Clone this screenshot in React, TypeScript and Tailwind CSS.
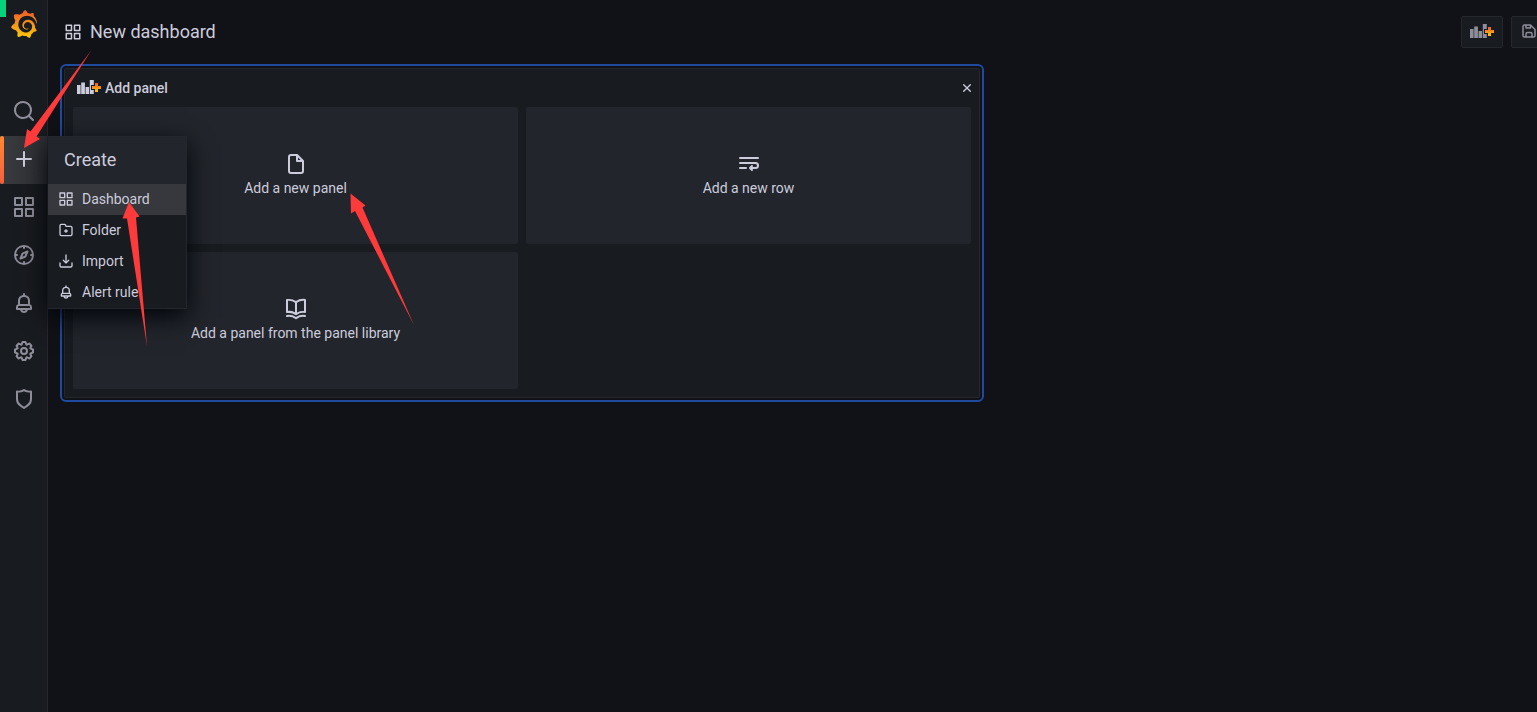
import React from "react";
import { SiGrafana } from "react-icons/si";

const paths = {
  search:
    "M21.71,20.29,18,16.61A9,9,0,1,0,16.61,18l3.68,3.68a1,1,0,0,0,1.42,0A1,1,0,0,0,21.71,20.29ZM11,18a7,7,0,1,1,7-7A7,7,0,0,1,11,18Z",
  plus: "M19,11H13V5a1,1,0,0,0-2,0v6H5a1,1,0,0,0,0,2h6v6a1,1,0,0,0,2,0V13h6a1,1,0,0,0,0-2Z",
  apps: "M10,13H3a1,1,0,0,0-1,1v7a1,1,0,0,0,1,1h7a1,1,0,0,0,1-1V14A1,1,0,0,0,10,13ZM9,20H4V15H9ZM21,2H14a1,1,0,0,0-1,1v7a1,1,0,0,0,1,1h7a1,1,0,0,0,1-1V3A1,1,0,0,0,21,2ZM20,9H15V4h5Zm1,4H14a1,1,0,0,0-1,1v7a1,1,0,0,0,1,1h7a1,1,0,0,0,1-1V14A1,1,0,0,0,21,13Zm-1,7H15V15h5ZM10,2H3A1,1,0,0,0,2,3v7a1,1,0,0,0,1,1h7a1,1,0,0,0,1-1V3A1,1,0,0,0,10,2ZM9,9H4V4H9Z",
  compass:
    "M12,2A10,10,0,1,0,22,12,10,10,0,0,0,12,2Zm1,17.93V19a1,1,0,0,0-2,0v.93A8,8,0,0,1,4.07,13H5a1,1,0,0,0,0-2H4.07A8,8,0,0,1,11,4.07V5a1,1,0,0,0,2,0V4.07A8,8,0,0,1,19.93,11H19a1,1,0,0,0,0,2h.93A8,8,0,0,1,13,19.93ZM15.14,7.55l-5,2.12a1,1,0,0,0-.52.52l-2.12,5a1,1,0,0,0,.21,1.1,1,1,0,0,0,.7.3.93.93,0,0,0,.4-.09l5-2.12a1,1,0,0,0,.52-.52l2.12-5a1,1,0,0,0-1.31-1.31Zm-2.49,5.1-2.28,1,1-2.28,2.28-1Z",
  bell: "M18,13.18V10a6,6,0,0,0-5-5.91V3a1,1,0,0,0-2,0V4.09A6,6,0,0,0,6,10v3.18A3,3,0,0,0,4,16v2a1,1,0,0,0,1,1H8.14a4,4,0,0,0,7.72,0H19a1,1,0,0,0,1-1V16A3,3,0,0,0,18,13.18ZM8,10a4,4,0,0,1,8,0v3H8Zm4,10a2,2,0,0,1-1.72-1h3.44A2,2,0,0,1,12,20Zm6-3H6V16a1,1,0,0,1,1-1H17a1,1,0,0,1,1,1Z",
  cog: "M21.32,9.55l-1.89-.63.89-1.78A1,1,0,0,0,20.13,6L18,3.87a1,1,0,0,0-1.15-.19l-1.78.89-.63-1.89A1,1,0,0,0,13.5,2h-3a1,1,0,0,0-.95.68L8.92,4.57,7.14,3.68A1,1,0,0,0,6,3.87L3.87,6a1,1,0,0,0-.19,1.15l.89,1.78-1.89.63A1,1,0,0,0,2,10.5v3a1,1,0,0,0,.68.95l1.89.63-.89,1.78A1,1,0,0,0,3.87,18L6,20.13a1,1,0,0,0,1.15.19l1.78-.89.63,1.89a1,1,0,0,0,.95.68h3a1,1,0,0,0,.95-.68l.63-1.89,1.78.89A1,1,0,0,0,18,20.13L20.13,18a1,1,0,0,0,.19-1.15l-.89-1.78,1.89-.63A1,1,0,0,0,22,13.5v-3A1,1,0,0,0,21.32,9.55ZM20,12.78l-1.2.4A2,2,0,0,0,17.64,16l.57,1.14-1.1,1.1L16,17.64a2,2,0,0,0-2.79,1.16l-.4,1.2H11.22l-.4-1.2A2,2,0,0,0,8,17.64l-1.14.57-1.1-1.1L6.36,16A2,2,0,0,0,5.2,13.18L4,12.78V11.22l1.2-.4A2,2,0,0,0,6.36,8L5.79,6.89l1.1-1.1L8,6.36A2,2,0,0,0,10.82,5.2l.4-1.2h1.56l.4,1.2A2,2,0,0,0,16,6.36l1.14-.57,1.1,1.1L17.64,8a2,2,0,0,0,1.16,2.79l1.2.4ZM12,8a4,4,0,1,0,4,4A4,4,0,0,0,12,8Zm0,6a2,2,0,1,1,2-2A2,2,0,0,1,12,14Z",
  shield:
    "M19.63,3.65a1,1,0,0,0-.84-.2,8,8,0,0,1-6.22-1.27,1,1,0,0,0-1.14,0A8,8,0,0,1,5.21,3.45a1,1,0,0,0-.84.2A1,1,0,0,0,4,4.43v7.45a9,9,0,0,0,3.77,7.33l3.65,2.6a1,1,0,0,0,1.16,0l3.65-2.6A9,9,0,0,0,20,11.88V4.43A1,1,0,0,0,19.63,3.65ZM18,11.88a7,7,0,0,1-2.93,5.7L12,19.77,8.93,17.58A7,7,0,0,1,6,11.88V5.58a10,10,0,0,0,6-1.39,10,10,0,0,0,6,1.39Z",
  folderPlus:
    "M14,12.5H13v-1a1,1,0,0,0-2,0v1H10a1,1,0,0,0,0,2h1v1a1,1,0,0,0,2,0v-1h1a1,1,0,0,0,0-2Zm5-7H12.72l-.32-1a3,3,0,0,0-2.84-2H5a3,3,0,0,0-3,3v13a3,3,0,0,0,3,3H19a3,3,0,0,0,3-3V8.5A3,3,0,0,0,19,5.5Zm1,13a1,1,0,0,1-1,1H5a1,1,0,0,1-1-1V5.5a1,1,0,0,1,1-1H9.56a1,1,0,0,1,.95.68l.54,1.64A1,1,0,0,0,12,7.5h7a1,1,0,0,1,1,1Z",
  import:
    "M21,14a1,1,0,0,0-1,1v4a1,1,0,0,1-1,1H5a1,1,0,0,1-1-1V15a1,1,0,0,0-2,0v4a3,3,0,0,0,3,3H19a3,3,0,0,0,3-3V15A1,1,0,0,0,21,14Zm-9.71,1.71a1,1,0,0,0,.33.21.94.94,0,0,0,.76,0,1,1,0,0,0,.33-.21l4-4a1,1,0,0,0-1.42-1.42L13,12.59V3a1,1,0,0,0-2,0v9.59l-2.29-2.3a1,1,0,1,0-1.42,1.42Z",
  file: "M20,8.94a1.31,1.31,0,0,0-.06-.27l0-.09a1.07,1.07,0,0,0-.19-.28h0l-6-6h0a1.07,1.07,0,0,0-.28-.19l-.09,0L13.06,2H7A3,3,0,0,0,4,5V19a3,3,0,0,0,3,3H17a3,3,0,0,0,3-3V9S20,9,20,8.94ZM14,5.41,16.59,8H14ZM18,19a1,1,0,0,1-1,1H7a1,1,0,0,1-1-1V5A1,1,0,0,1,7,4h5V9a1,1,0,0,0,1,1h5Z",
  wrap: "M3,7H21a1,1,0,0,0,0-2H3A1,1,0,0,0,3,7ZM9,15H3a1,1,0,0,0,0,2H9a1,1,0,0,0,0-2Zm9.5-5H3a1,1,0,0,0,0,2H18.5a1.5,1.5,0,0,1,0,3H15.41l.3-.29a1,1,0,0,0-1.42-1.42l-2,2a1,1,0,0,0,0,1.42l2,2a1,1,0,0,0,1.42-1.42L15.41,17H18.5a3.5,3.5,0,0,0,0-7Z",
  book: "M21.17,2.06A13.1,13.1,0,0,0,19,1.87a12.94,12.94,0,0,0-7,2.05,12.94,12.94,0,0,0-7-2,13.1,13.1,0,0,0-2.17.19,1,1,0,0,0-.83,1v12a1,1,0,0,0,1.17,1,10.9,10.9,0,0,1,8.25,1.91l.12.07.11,0a.91.91,0,0,0,.7,0l.11,0,.12-.07A10.9,10.9,0,0,1,20.83,16,1,1,0,0,0,22,15V3A1,1,0,0,0,21.17,2.06ZM11,15.35a12.87,12.87,0,0,0-6-1.48c-.33,0-.66,0-1,0v-10a8.69,8.69,0,0,1,1,0,10.86,10.86,0,0,1,6,1.8Zm9-1.44c-.34,0-.67,0-1,0a12.87,12.87,0,0,0-6,1.48V5.67a10.86,10.86,0,0,1,6-1.8,8.69,8.69,0,0,1,1,0Zm1.17,4.15A13.1,13.1,0,0,0,19,17.87a12.94,12.94,0,0,0-7,2.05,12.94,12.94,0,0,0-7-2.05,13.1,13.1,0,0,0-2.17.19A1,1,0,0,0,2,19.21a1,1,0,0,0,1.17.81,10.9,10.9,0,0,1,8.25,1.91,1,1,0,0,0,1.16,0A10.9,10.9,0,0,1,20.83,20,1,1,0,0,0,22,19.21,1,1,0,0,0,21.17,18.06Z",
  times:
    "M13.41,12l4.3-4.29a1,1,0,1,0-1.42-1.42L12,10.59,7.71,6.29A1,1,0,0,0,6.29,7.71L10.59,12l-4.3,4.29a1,1,0,0,0,0,1.42,1,1,0,0,0,1.42,0L12,13.41l4.29,4.3a1,1,0,0,0,1.42,0,1,1,0,0,0,0-1.42Z",
  save: "M20.71,9.29l-6-6a1,1,0,0,0-.32-.21A1.09,1.09,0,0,0,14,3H6A3,3,0,0,0,3,6V18a3,3,0,0,0,3,3H18a3,3,0,0,0,3-3V10A1,1,0,0,0,20.71,9.29ZM9,5h4V7H9Zm6,14H9V16a1,1,0,0,1,1-1h4a1,1,0,0,1,1,1Zm4-1a1,1,0,0,1-1,1H17V16a3,3,0,0,0-3-3H10a3,3,0,0,0-3,3v3H6a1,1,0,0,1-1-1V6A1,1,0,0,1,6,5H7V8A1,1,0,0,0,8,9h6a1,1,0,0,0,1-1V6.41l4,4Z",
};

type IconName = keyof typeof paths;

function Icon({ name, className }: { name: IconName; className: string }) {
  return (
    <svg viewBox="0 0 24 24" fill="currentColor" aria-hidden="true" className={`shrink-0 ${className}`}>
      <path d={paths[name]} />
    </svg>
  );
}

function PanelAddIcon() {
  return (
    <svg viewBox="0 0 24 16" aria-hidden="true" className="h-4 w-6 shrink-0">
      <path fill="currentColor" d="M0 5h3.6v9H0zM4.2 2.4h3.7V14H4.2zM8.5 7h3.6v7H8.5zM12.8 0h4v14h-4z" />
      <path
        fill="url(#brand)"
        stroke="#181b1f"
        strokeWidth="2"
        style={{ paintOrder: "stroke" }}
        d="M18 3h3v3h3v3h-3v3h-3V9h-3V6h3z"
      />
    </svg>
  );
}

const sideItems: { icon: IconName; label: string }[] = [
  { icon: "search", label: "Search dashboards" },
  { icon: "plus", label: "Create" },
  { icon: "apps", label: "Dashboards" },
  { icon: "compass", label: "Explore" },
  { icon: "bell", label: "Alerting" },
  { icon: "cog", label: "Configuration" },
  { icon: "shield", label: "Server Admin" },
];

const createItems: { icon: IconName; label: string }[] = [
  { icon: "apps", label: "Dashboard" },
  { icon: "folderPlus", label: "Folder" },
  { icon: "import", label: "Import" },
  { icon: "bell", label: "Alert rule" },
];

const addItems: { icon: IconName; label: string }[] = [
  { icon: "file", label: "Add a new panel" },
  { icon: "wrap", label: "Add a new row" },
  { icon: "book", label: "Add a panel from the panel library" },
];

function CreateMenu() {
  return (
    <div className="absolute top-0 left-12 z-20 w-[139px] border border-l-0 border-[#25272c] bg-[#181b1f] shadow-[0_8px_24px_rgb(1,4,9)]">
      <h2 className="flex h-[47px] items-center bg-[#22252b] px-4 pb-0.5 text-lg">Create</h2>
      <ul>
        {createItems.map((item, i) => (
          <li key={item.label}>
            <a
              href="#"
              className={`flex h-[31px] items-center gap-2 px-2.5 pb-0.5 text-sm ${i === 0 ? "bg-[#36383d]" : ""}`}
            >
              <Icon name={item.icon} className="size-4" />
              {item.label}
            </a>
          </li>
        ))}
      </ul>
    </div>
  );
}

function Sidebar() {
  return (
    <nav aria-label="Main" className="relative z-10 w-12 shrink-0 border-r border-[#25272c] bg-[#181b1f]">
      <span className="absolute top-0 left-0 h-[17px] w-1.5 bg-[#06d37c]" />
      <a href="#" aria-label="Home" className="flex h-12 items-center justify-center">
        <SiGrafana className="size-7" style={{ fill: "url(#brand)" }} />
      </a>
      <ul className="pt-10 text-[#8e8e9a]">
        {sideItems.map((item) => {
          const active = item.icon === "plus";
          return (
            <li key={item.label} className={active ? "relative text-[#ccccdc]" : ""}>
              <a
                href="#"
                aria-label={item.label}
                className={`flex h-12 items-center justify-center pb-0.5 ${active ? "bg-linear-to-r from-[#3a3c40] to-[#2d2f34]" : ""}`}
              >
                <Icon name={item.icon} className="size-6" />
              </a>
              {active && (
                <>
                  <span className="absolute top-0 left-0 h-full w-1 rounded-xs bg-linear-to-b from-[#ff8833] to-[#f55f3e]" />
                  <CreateMenu />
                </>
              )}
            </li>
          );
        })}
      </ul>
    </nav>
  );
}

function Annotations() {
  return (
    <svg
      aria-hidden="true"
      className="pointer-events-none absolute top-0 left-0 z-30 h-[360px] w-[440px]"
      viewBox="0 0 440 360"
      fill="#ff3a3a"
    >
      <path d="M91.5 50 30.5 131.500 27 129 24 148 40 139 36.500 136.500Z" />
      <path d="M147 346.500 136 217.500 139.500 216.500 129 202 122.500 218.500 127 218.500Z" />
      <path d="M414 325 362.500 207.500 365.500 205.500 350.500 193.500 351 213.500 355 211Z" />
    </svg>
  );
}

export default function App() {
  return (
    <div className="relative flex min-h-screen overflow-hidden bg-[#111217] font-[Roboto,sans-serif] text-sm text-[#ccccdc]">
      <svg aria-hidden="true" className="absolute size-0">
        <defs>
          <linearGradient id="brand" x1="0" y1="0" x2="0" y2="1">
            <stop offset="0" stopColor="#f05a28" />
            <stop offset="1" stopColor="#fbca0a" />
          </linearGradient>
        </defs>
      </svg>
      <Sidebar />
      <main className="min-w-0 flex-1 overflow-hidden">
        <header className="flex h-16 items-center justify-between pl-4">
          <div className="flex items-center gap-2">
            <Icon name="apps" className="size-[18px]" />
            <h1 className="text-lg">New dashboard</h1>
          </div>
          <div className="-mr-4 flex gap-2 text-[#8e8e9a]">
            <button
              aria-label="Add panel"
              className="flex h-8 w-[42px] items-center justify-center rounded-xs border border-[#25272c] bg-[#181b1f]"
            >
              <PanelAddIcon />
            </button>
            <button
              aria-label="Save dashboard"
              className="flex h-8 w-[42px] items-center rounded-xs border border-[#25272c] bg-[#181b1f] pb-0.5 pl-2"
            >
              <Icon name="save" className="size-[18px]" />
            </button>
          </div>
        </header>
        <section className="ml-3 w-[924px] max-w-full rounded-md border-2 border-[#1f4aa0] p-0.5">
          <div className="rounded-xs border border-[#25272c] bg-[#181b1f] px-2 pb-2">
            <div className="flex h-[38px] items-center gap-1 pl-1">
              <PanelAddIcon />
              <h2 className="flex-1 font-medium">Add panel</h2>
              <button aria-label="Close" className="-mr-1">
                <Icon name="times" className="size-4" />
              </button>
            </div>
            <div className="grid grid-cols-2 gap-2">
              {addItems.map((item) => (
                <button
                  key={item.label}
                  className="flex h-[137px] flex-col items-center justify-center rounded-xs bg-[#22252b]"
                >
                  <Icon name={item.icon} className="size-6" />
                  <span className="leading-6">{item.label}</span>
                </button>
              ))}
            </div>
          </div>
        </section>
      </main>
      <Annotations />
    </div>
  );
}
